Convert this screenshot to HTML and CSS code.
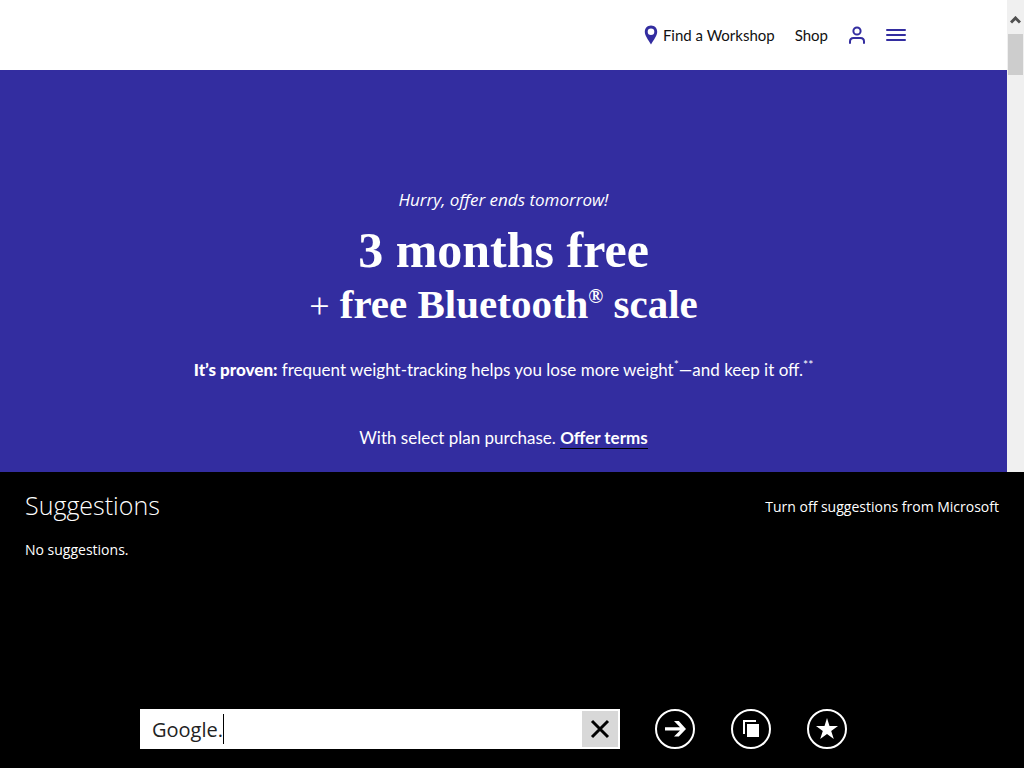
FILE: index.html
```html
<!DOCTYPE html>
<html lang="en">
<head>
<meta charset="utf-8">
<meta name="viewport" content="width=device-width, initial-scale=1">
<title>3 months free + free Bluetooth scale</title>
<link rel="stylesheet" href="styles.css">
</head>
<body>
<div class="browser">
  <div class="viewport">
    <div class="page">
      <header class="site-header">
        <nav class="site-nav">
          <a class="nav-link" href="#workshop">
            <svg class="pin" viewBox="0 0 14 20" width="14" height="20" aria-hidden="true"><path fill-rule="evenodd" d="M7 0.500C3.200 0.500 0.800 3.300 0.800 6.700C0.800 10.800 4.300 14.500 7 19.500C9.700 14.500 13.200 10.800 13.200 6.700C13.200 3.300 10.800 0.500 7 0.500ZM7 3.500A3.300 3.300 0 1 1 7 10.100A3.300 3.300 0 0 1 7 3.500Z"/></svg>
            <span>Find a Workshop</span>
          </a>
          <a class="nav-link" href="#shop">Shop</a>
          <button class="nav-button" type="button" aria-label="Account">
            <svg viewBox="0 0 18 18" width="18" height="18" aria-hidden="true"><circle cx="9" cy="5" r="3.600"/><path d="M2 17V15.500C2 13.200 3.500 12 5.500 12H12.500C14.500 12 16 13.200 16 15.500V17"/></svg>
          </button>
          <button class="nav-button" type="button" aria-label="Menu">
            <svg viewBox="0 0 20 14" width="20" height="14" aria-hidden="true"><path d="M1 2H19M1 7H19M1 12H19"/></svg>
          </button>
        </nav>
      </header>
      <main class="hero">
        <p class="hurry">Hurry, offer ends tomorrow!</p>
        <h1 class="headline">3 months free</h1>
        <h2 class="subhead"><span class="plus">+</span> free Bluetooth<sup class="reg">®</sup> scale</h2>
        <p class="proof"><strong>It’s proven:</strong> frequent weight-tracking helps you lose more weight<sup>*</sup>—and keep it off.<sup>**</sup></p>
        <p class="terms">With select plan purchase. <a href="#terms">Offer terms</a></p>
      </main>
    </div>
    <div class="scrollbar" aria-hidden="true">
      <svg class="scroll-up" viewBox="0 0 11 8" width="11" height="8"><path d="M1 6.500L5.500 2L10 6.500"/></svg>
      <div class="scroll-thumb"></div>
    </div>
  </div>
  <section class="panel">
    <div class="panel-head">
      <h2 class="panel-title">Suggestions</h2>
      <a class="panel-link" href="#suggestions-off">Turn off suggestions from Microsoft</a>
    </div>
    <p class="panel-empty">No suggestions.</p>
    <form class="address-bar">
      <div class="address">
        <label class="address-label">
          <input class="address-input" type="text" value="Google." aria-label="Address">
          <span class="caret"></span>
        </label>
        <button class="clear" type="button" aria-label="Clear">
          <svg viewBox="0 0 20 20" width="20" height="20" aria-hidden="true"><path d="M2 2L18 18M18 2L2 18"/></svg>
        </button>
      </div>
      <div class="actions">
        <button class="round" type="submit" aria-label="Go">
          <svg viewBox="2 2 36 36" width="36" height="36" aria-hidden="true"><path d="M10 18.200H25L19 12H23.800L31 20L23.800 27.500H19L25 21.400H10Z"/></svg>
        </button>
        <button class="round" type="button" aria-label="Tabs">
          <svg viewBox="2 2 36 36" width="36" height="36" aria-hidden="true"><path d="M12 11H25V13H14V25H12Z M16 15H28V28H16Z"/></svg>
        </button>
        <button class="round" type="button" aria-label="Favorites">
          <svg viewBox="2 2 36 36" width="36" height="36" aria-hidden="true"><path d="M20 9L22.500 17H31L24.200 21.900L26.800 30L20 25L13.200 30L15.800 21.900L9 17H17.500Z"/></svg>
        </button>
      </div>
    </form>
  </section>
</div>
</body>
</html>
```
FILE: styles.css
```css
* {
  box-sizing: border-box;
}

body {
  margin: 0;
  background: #000;
  font-family: Lato, "Liberation Sans", sans-serif;
}

h1, h2, p {
  margin: 0;
}

button {
  padding: 0;
  border: 0;
  background: none;
  cursor: pointer;
}

svg {
  display: block;
}

.browser {
  display: flex;
  flex-direction: column;
  min-height: 100vh;
}

.viewport {
  display: flex;
}

.page {
  flex: 1;
  min-width: 0;
}

.site-header {
  display: flex;
  justify-content: flex-end;
  align-items: center;
  min-height: 70px;
  padding: 0 101px;
  background: #fff;
}

.site-nav {
  display: flex;
  align-items: center;
  gap: 20px;
}

.nav-link {
  display: flex;
  align-items: center;
  gap: 5px;
  color: #111;
  font-size: 15px;
  line-height: 24px;
  text-decoration: none;
}

.pin {
  fill: #332da0;
}

.nav-button svg {
  fill: none;
  stroke: #332da0;
  stroke-width: 2;
  stroke-linecap: round;
}

.hero {
  padding: 116px 24px 20px;
  background: #332da0;
  color: #fff;
  font-size: 17px;
  line-height: 28px;
  text-align: center;
}

.hurry {
  font-family: "Open Sans", sans-serif;
  font-style: italic;
}

.headline,
.subhead {
  font-family: "Liberation Serif", serif;
  font-weight: 700;
}

.headline {
  margin-top: 8px;
  font-size: 50px;
  line-height: 56px;
}

.subhead {
  font-size: 41px;
  line-height: 52px;
}

.plus {
  font-size: 36px;
  font-weight: 400;
}

.reg {
  font-size: 20px;
  line-height: 0;
}

.proof {
  margin-top: 24px;
}

.proof strong {
  font-weight: 900;
}

.proof sup {
  font-size: 12px;
  line-height: 0;
}

.terms {
  margin-top: 40px;
}

.terms a {
  border-bottom: 1px solid #000;
  color: inherit;
  font-weight: 700;
  text-decoration: none;
}

.scrollbar {
  display: flex;
  flex-direction: column;
  align-items: center;
  width: 17px;
  padding: 16px 1px 0;
  background: #f0f0f0;
}

.scroll-up {
  fill: none;
  stroke: #505050;
  stroke-width: 3;
}

.scroll-thumb {
  width: 100%;
  height: 41px;
  margin-top: 10px;
  background: #cdcdcd;
}

.panel {
  display: flex;
  flex: 1;
  flex-direction: column;
  padding: 13px 25px 19px;
  background: #000;
  color: #fff;
  font-family: "Open Sans", "Noto Sans", sans-serif;
  font-size: 14px;
  line-height: 20px;
}

.panel-head {
  display: flex;
  justify-content: space-between;
  align-items: center;
}

.panel-title {
  font-size: 25px;
  font-weight: 300;
  line-height: 40px;
}

.panel-link {
  padding-top: 4px;
  color: inherit;
  text-decoration: none;
}

.panel-empty {
  margin-top: 15px;
}

.address-bar {
  display: flex;
  align-items: center;
  gap: 35px;
  margin-top: auto;
  padding: 0 152px 0 115px;
}

.address {
  display: flex;
  flex: 1;
  min-width: 0;
  height: 40px;
  padding: 2px;
  background: #fff;
}

.address-label {
  display: flex;
  flex: 1;
  align-items: center;
  min-width: 0;
  padding-left: 10px;
}

.address-input {
  field-sizing: content;
  min-width: 0;
  padding: 0;
  border: 0;
  outline: 0;
  background: none;
  color: #222;
  font-family: "Open Sans", "Noto Sans", sans-serif;
  font-size: 20px;
}

.caret {
  width: 1px;
  height: 30px;
  background: #000;
}

.clear {
  display: grid;
  place-items: center;
  width: 36px;
  background: #d8d8d8;
}

.clear svg {
  fill: none;
  stroke: #000;
  stroke-width: 3;
}

.actions {
  display: flex;
  gap: 36px;
}

.round {
  display: grid;
  flex: none;
  place-items: center;
  width: 40px;
  height: 40px;
  border: 2px solid #fff;
  border-radius: 50%;
}

.round svg {
  fill: #fff;
}
```
